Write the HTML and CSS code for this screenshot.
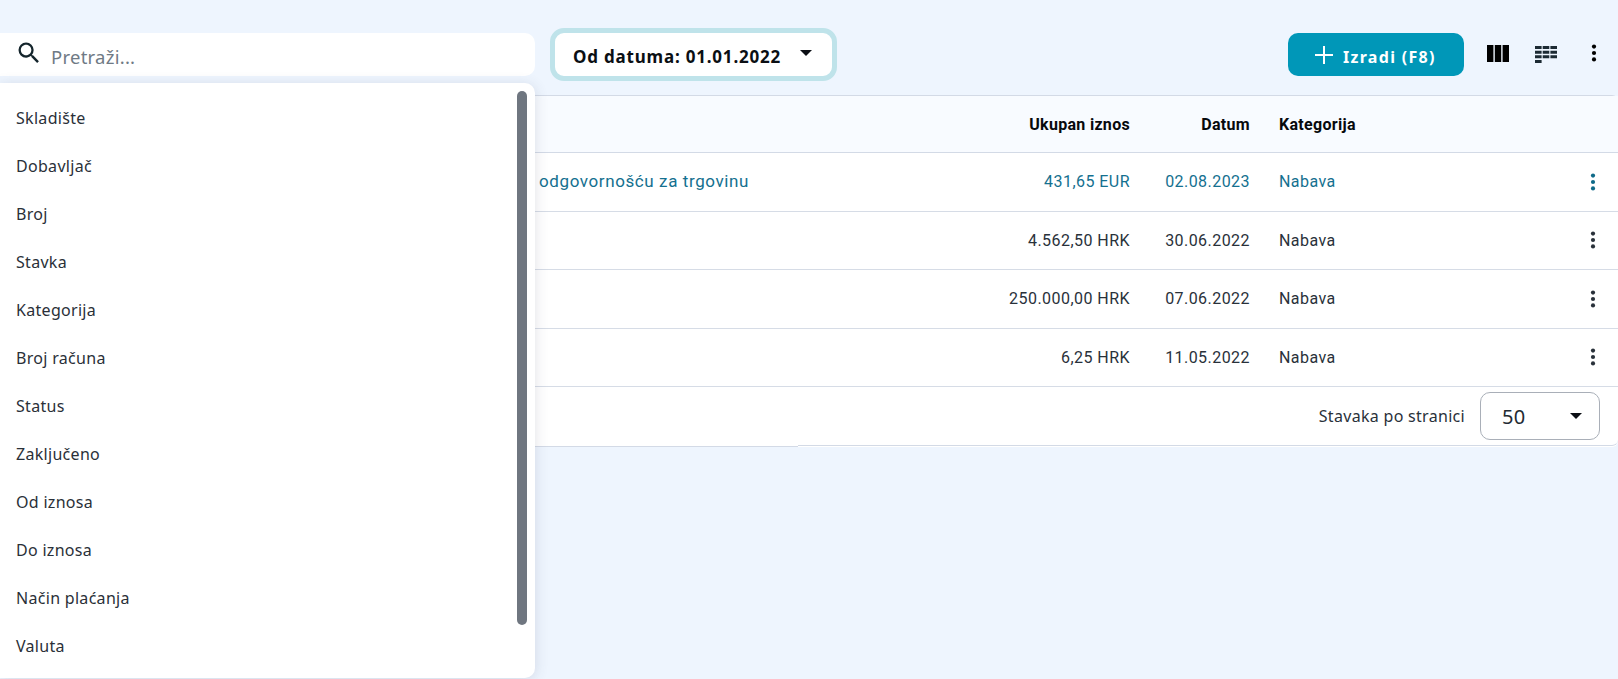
FILE: index.html
```html
<!DOCTYPE html>
<html lang="hr">
<head>
<meta charset="utf-8">
<title>Nabava</title>
<link rel="stylesheet" href="styles.css">
</head>
<body>
<div class="page">
  <aside class="filter">
    <div class="search">
      <svg class="search-icon" viewBox="0 0 24 24"><path d="M15.5 14h-.79l-.28-.27A6.471 6.471 0 0 0 16 9.5 6.5 6.5 0 1 0 9.5 16c1.61 0 3.09-.59 4.23-1.57l.27.28v.79l5 4.99L20.49 19l-4.99-5zm-6 0C7.01 14 5 11.99 5 9.5S7.01 5 9.5 5 14 7.01 14 9.5 11.99 14 9.5 14z"/></svg>
      <span class="placeholder">Pretraži...</span>
    </div>
    <div class="menu">
      <ul class="menu-list">
        <li>Skladište</li>
        <li>Dobavljač</li>
        <li>Broj</li>
        <li>Stavka</li>
        <li>Kategorija</li>
        <li>Broj računa</li>
        <li>Status</li>
        <li>Zaključeno</li>
        <li>Od iznosa</li>
        <li>Do iznosa</li>
        <li>Način plaćanja</li>
        <li>Valuta</li>
      </ul>
      <div class="thumb"></div>
    </div>
  </aside>
  <main class="content">
    <div class="toolbar">
      <button class="date-btn"><span class="label">Od datuma: 01.01.2022</span><svg class="caret" viewBox="0 0 12 6"><path d="M0 0h12L6 6z"/></svg></button>
      <button class="create-btn"><svg class="plus" viewBox="0 0 18 18"><path d="M8 0h2v8h8v2h-8v8H8v-8H0V8h8z"/></svg><span class="label">Izradi (F8)</span></button>
      <svg class="tool-icon columns" viewBox="0 0 22 17"><path d="M0 0h6.4v17H0zM7.8 0h6.4v17H7.8zM15.6 0H22v17h-6.4z"/></svg>
      <svg class="tool-icon compact" viewBox="0 0 22 17"><path d="M0 0h6.6v3H0zM7.7 0h6.6v3H7.7zM15.4 0H22v3h-6.6zM0 4.7h6.6v3H0zM7.7 4.7h6.6v3H7.7zM15.4 4.7H22v3h-6.6zM0 9.3h6.6v3H0zM7.7 9.3h6.6v3H7.7zM15.4 9.3H22v3h-6.6zM0 14h6.6v3H0z"/></svg>
      <svg class="kebab" viewBox="0 0 6 18"><circle cx="3" cy="2.6" r="2.1"/><circle cx="3" cy="9" r="2.1"/><circle cx="3" cy="15.4" r="2.1"/></svg>
    </div>
    <div class="table">
      <div class="row head">
        <span class="name"></span>
        <span class="amount">Ukupan iznos</span>
        <span class="date">Datum</span>
        <span class="cat">Kategorija</span>
        <span class="act"></span>
      </div>
      <div class="row active">
        <span class="name">odgovornošću za trgovinu</span>
        <span class="amount">431,65 EUR</span>
        <span class="date">02.08.2023</span>
        <span class="cat">Nabava</span>
        <span class="act"><svg class="kebab" viewBox="0 0 6 18"><circle cx="3" cy="2.6" r="2.1"/><circle cx="3" cy="9" r="2.1"/><circle cx="3" cy="15.4" r="2.1"/></svg></span>
      </div>
      <div class="row">
        <span class="name"></span>
        <span class="amount">4.562,50 HRK</span>
        <span class="date">30.06.2022</span>
        <span class="cat">Nabava</span>
        <span class="act"><svg class="kebab" viewBox="0 0 6 18"><circle cx="3" cy="2.6" r="2.1"/><circle cx="3" cy="9" r="2.1"/><circle cx="3" cy="15.4" r="2.1"/></svg></span>
      </div>
      <div class="row">
        <span class="name"></span>
        <span class="amount">250.000,00 HRK</span>
        <span class="date">07.06.2022</span>
        <span class="cat">Nabava</span>
        <span class="act"><svg class="kebab" viewBox="0 0 6 18"><circle cx="3" cy="2.6" r="2.1"/><circle cx="3" cy="9" r="2.1"/><circle cx="3" cy="15.4" r="2.1"/></svg></span>
      </div>
      <div class="row">
        <span class="name"></span>
        <span class="amount">6,25 HRK</span>
        <span class="date">11.05.2022</span>
        <span class="cat">Nabava</span>
        <span class="act"><svg class="kebab" viewBox="0 0 6 18"><circle cx="3" cy="2.6" r="2.1"/><circle cx="3" cy="9" r="2.1"/><circle cx="3" cy="15.4" r="2.1"/></svg></span>
      </div>
      <div class="footer">
        <div class="footer-left"></div>
        <div class="footer-right">
          <span class="per-page">Stavaka po stranici</span>
          <div class="select"><span>50</span><svg class="caret" viewBox="0 0 12 6"><path d="M0 0h12L6 6z"/></svg></div>
        </div>
      </div>
    </div>
  </main>
</div>
</body>
</html>
```
FILE: styles.css
```css
* { box-sizing: border-box; }
html, body { margin: 0; height: 100%; }
body { background: #eef5fe; overflow: hidden; font-family: "Noto Sans", sans-serif; color: #232a33; }
.page { display: flex; height: 679px; }

.filter { position: relative; width: 535px; flex: none; padding-top: 33px; z-index: 2; }
.search { height: 43px; background: #fff; border-radius: 0 10px 10px 0; display: flex; align-items: center; padding-left: 15px; }
.search-icon { width: 28px; height: 28px; fill: #14252c; margin-top: -4px; }
.placeholder { font-size: 18.5px; letter-spacing: .25px; color: #6f7a85; margin: 3px 0 0 8px; }
.menu { position: absolute; left: 0; right: 0; top: 83px; height: 595px; background: #fff; border-radius: 0 10px 10px 0; box-shadow: 0 2px 14px rgba(60, 70, 100, .16); }
.menu-list { list-style: none; margin: 0; padding: 11px 0 0 16px; font-size: 16px; letter-spacing: .3px; color: #2a3038; }
.menu-list li { height: 48px; display: flex; align-items: center; }
.thumb { position: absolute; top: 8px; right: 8px; width: 10px; height: 534px; background: #6f7680; border-radius: 5px; }

.content { flex: 1; min-width: 0; }
.toolbar { height: 95px; display: flex; align-items: flex-start; padding-top: 33px; }
.label { margin-top: 4px; }
.date-btn { margin: -5px 0 0 15px; width: 287px; height: 53px; border: 5px solid #bfe3ea; border-radius: 14px; background: #fff; display: flex; align-items: center; padding: 0 0 0 18px; font: 700 17px "Noto Sans", sans-serif; letter-spacing: .8px; color: #0b0f14; }
.caret { width: 12px; height: 6px; fill: #0b0f14; }
.date-btn .caret { margin-left: 19px; margin-top: -4px; }
.create-btn { margin-left: auto; width: 176px; height: 43px; border: 0; border-radius: 10px; background: #0097b8; color: #fff; display: flex; align-items: center; padding: 0 0 0 27px; font: 700 16px "Noto Sans", sans-serif; letter-spacing: 1.3px; }
.plus { width: 18px; height: 18px; fill: #fff; margin-right: 10px; }
.tool-icon { fill: #000; width: 22px; height: 17px; }
.columns { margin: 12px 0 0 23px; }
.compact { margin: 13px 0 0 26px; fill: #1c2a33; }
.kebab { width: 6px; height: 18px; fill: #000; display: block; }
.toolbar > .kebab { margin: 11px 21px 0 34px; }

.table { background: #fff; border-top: 1px solid #d3dae6; border-radius: 0 6px 6px 0; }
.row { display: grid; grid-template-columns: 1fr 160px 120px 320px 48px; height: 58.5px; align-items: center; border-bottom: 1px solid #d6dce6; font: 400 16px Roboto, sans-serif; letter-spacing: .45px; color: #29313a; padding-left: 4px; }
.row.head { height: 57px; background: #f8fbff; font-weight: 700; color: #07090c; border-bottom-color: #d3dae6; letter-spacing: .3px; }
.name { white-space: nowrap; font-size: 17px; letter-spacing: .6px; margin-top: -2px; }
.amount, .date { text-align: right; }
.cat { padding-left: 29px; }
.act { display: flex; justify-content: flex-start; padding-left: 20px; }
.row .kebab { fill: #29313a; }
.row.active { color: #14708f; }
.row.active .kebab { fill: #0f6a88; }

.footer { display: flex; align-items: flex-start; }
.footer-left { width: 263px; height: 60px; border-bottom: 1px solid #d3dae6; background: #fff; }
.footer-right { flex: 1; height: 59px; border-bottom: 1px solid #d3dae6; border-radius: 0 0 6px 0; display: flex; align-items: center; justify-content: flex-end; padding-right: 18px; font-size: 16px; letter-spacing: .3px; }
.per-page { color: #29313a; }
.select { width: 120px; height: 48px; margin-left: 15px; border: 1px solid #a9afb8; border-radius: 10px; display: flex; align-items: center; justify-content: space-between; padding: 0 17px 0 21px; font-size: 20px; }
```
